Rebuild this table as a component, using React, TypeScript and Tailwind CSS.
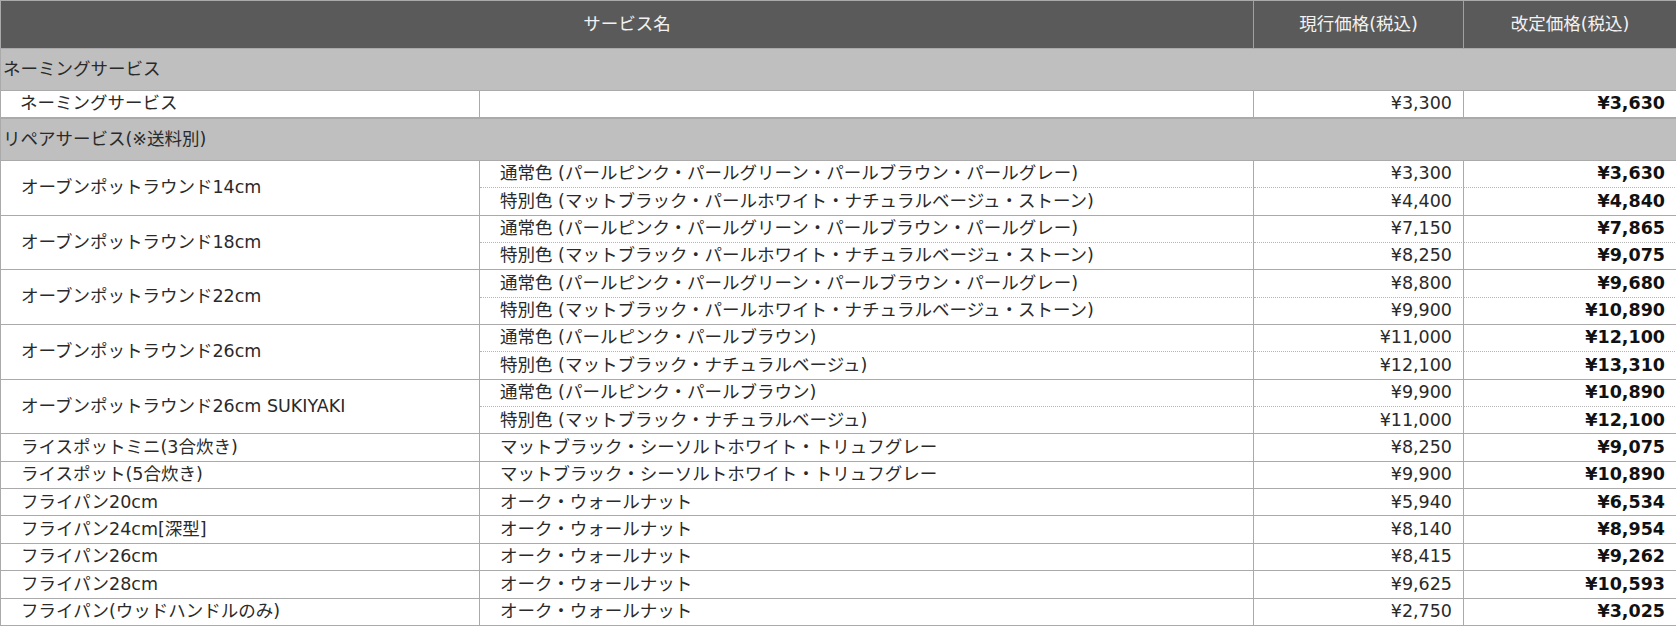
const FONT = { fontFamily: '"DejaVu Sans", "Noto Sans CJK JP", sans-serif' };

type Variant = { label: string; current: string; revised: string };
type Product = { name: string; variants: Variant[] };

const NORMAL_4 = '通常色 (パールピンク・パールグリーン・パールブラウン・パールグレー)';
const SPECIAL_4 = '特別色 (マットブラック・パールホワイト・ナチュラルベージュ・ストーン)';
const NORMAL_2 = '通常色 (パールピンク・パールブラウン)';
const SPECIAL_2 = '特別色 (マットブラック・ナチュラルベージュ)';
const RICE = 'マットブラック・シーソルトホワイト・トリュフグレー';
const WOOD = 'オーク・ウォールナット';

const products: Product[] = [
    { name: 'オーブンポットラウンド14cm', variants: [{ label: NORMAL_4, current: '¥3,300', revised: '¥3,630' }, { label: SPECIAL_4, current: '¥4,400', revised: '¥4,840' }] },
    { name: 'オーブンポットラウンド18cm', variants: [{ label: NORMAL_4, current: '¥7,150', revised: '¥7,865' }, { label: SPECIAL_4, current: '¥8,250', revised: '¥9,075' }] },
    { name: 'オーブンポットラウンド22cm', variants: [{ label: NORMAL_4, current: '¥8,800', revised: '¥9,680' }, { label: SPECIAL_4, current: '¥9,900', revised: '¥10,890' }] },
    { name: 'オーブンポットラウンド26cm', variants: [{ label: NORMAL_2, current: '¥11,000', revised: '¥12,100' }, { label: SPECIAL_2, current: '¥12,100', revised: '¥13,310' }] },
    { name: 'オーブンポットラウンド26cm SUKIYAKI', variants: [{ label: NORMAL_2, current: '¥9,900', revised: '¥10,890' }, { label: SPECIAL_2, current: '¥11,000', revised: '¥12,100' }] },
    { name: 'ライスポットミニ(3合炊き)', variants: [{ label: RICE, current: '¥8,250', revised: '¥9,075' }] },
    { name: 'ライスポット(5合炊き)', variants: [{ label: RICE, current: '¥9,900', revised: '¥10,890' }] },
    { name: 'フライパン20cm', variants: [{ label: WOOD, current: '¥5,940', revised: '¥6,534' }] },
    { name: 'フライパン24cm[深型]', variants: [{ label: WOOD, current: '¥8,140', revised: '¥8,954' }] },
    { name: 'フライパン26cm', variants: [{ label: WOOD, current: '¥8,415', revised: '¥9,262' }] },
    { name: 'フライパン28cm', variants: [{ label: WOOD, current: '¥9,625', revised: '¥10,593' }] },
    { name: 'フライパン(ウッドハンドルのみ)', variants: [{ label: WOOD, current: '¥2,750', revised: '¥3,025' }] },
];

const cell = 'border-r border-b border-[#aaaaaa] p-0 align-middle';

export default function App() {
    return (
        <div className="bg-white text-[#2a2a2a] text-[17.5px] leading-none" style={FONT}>
            <table className="table-fixed w-[1676px] border-separate border-spacing-0 border-t border-l border-[#aaaaaa]">
                <colgroup>
                    <col className="w-[479px]" />
                    <col className="w-[774px]" />
                    <col className="w-[210px]" />
                    <col className="w-[213px]" />
                </colgroup>
                <thead>
                    <tr className="h-[48px] bg-[#5a5a5a] text-[#f2f2f2]">
                        <th colSpan={2} className={`${cell} border-r-[#a0a0a0] font-normal text-center`}>サービス名</th>
                        <th className={`${cell} border-r-[#a0a0a0] font-normal text-center`}>現行価格(税込)</th>
                        <th className={`${cell} font-normal text-center`}>改定価格(税込)</th>
                    </tr>
                </thead>
                <tbody>
                    {/* Naming */}
                    <tr className="h-[42px] bg-[#bfbfbf]">
                        <td colSpan={4} className={`${cell} pl-[2px]`}>ネーミングサービス</td>
                    </tr>
                    <tr className="h-[28px]">
                        <td className={`${cell} border-b-2 pl-[19px]`}>ネーミングサービス</td>
                        <td className={`${cell} border-b-2`}></td>
                        <td className={`${cell} border-b-2 text-right pr-[11px]`}>¥3,300</td>
                        <td className={`${cell} border-b-2 text-right pr-[11px] font-bold text-[#111111]`}>¥3,630</td>
                    </tr>

                    {/* Repair */}
                    <tr className="h-[42px] bg-[#bfbfbf]">
                        <td colSpan={4} className={`${cell} pl-[2px]`}>リペアサービス(※送料別)</td>
                    </tr>
                    {products.map((p) =>
                        p.variants.map((v, i) => {
                            const dotted = p.variants.length > 1 && i === 0 ? 'border-b-[#b5b5b5] [border-bottom-style:dotted]' : '';
                            return (
                                <tr key={p.name + i} className="h-[27.35px]">
                                    {i === 0 && (
                                        <td rowSpan={p.variants.length} className={`${cell} pl-[20px]`}>{p.name}</td>
                                    )}
                                    <td className={`${cell} ${dotted} pl-[20px]`}>{v.label}</td>
                                    <td className={`${cell} ${dotted} text-right pr-[11px]`}>{v.current}</td>
                                    <td className={`${cell} ${dotted} text-right pr-[11px] font-bold text-[#111111]`}>{v.revised}</td>
                                </tr>
                            );
                        })
                    )}
                </tbody>
            </table>
        </div>
    );
}
